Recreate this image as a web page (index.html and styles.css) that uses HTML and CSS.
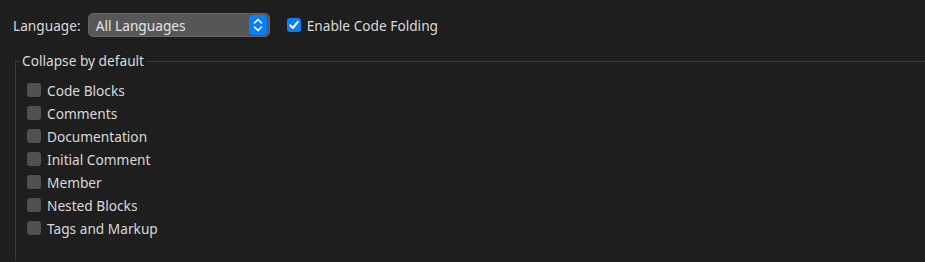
FILE: index.html
```html
<!DOCTYPE html>
<html lang="en">
    <head>
        <meta charset="UTF-8">
        <meta name="viewport" content="width=device-width, initial-scale=1.0">
        <title>Code Folding</title>
        <link rel="stylesheet" href="styles.css">
    </head>
    <body>
        <!-- Top row -->
        <div class="toolbar">
            <span class="label">Language:</span>

            <div class="select">
                <span class="select-text">All Languages</span>
                <span class="stepper">
                    <svg width="18" height="20" viewBox="0 0 18 20">
                        <path d="M5.5 8 L9 4.5 L12.5 8" fill="none" stroke="#fff" stroke-width="1.6" stroke-linecap="round" stroke-linejoin="round"/>
                        <path d="M5.5 12 L9 15.5 L12.5 12" fill="none" stroke="#fff" stroke-width="1.6" stroke-linecap="round" stroke-linejoin="round"/>
                    </svg>
                </span>
            </div>

            <label class="check">
                <input type="checkbox" class="box" checked>
                <span>Enable Code Folding</span>
            </label>
        </div>

        <!-- Collapse options -->
        <fieldset class="group">
            <legend class="legend">Collapse by default</legend>

            <label class="check row"><input type="checkbox" class="box"><span>Code Blocks</span></label>
            <label class="check row"><input type="checkbox" class="box"><span>Comments</span></label>
            <label class="check row"><input type="checkbox" class="box"><span>Documentation</span></label>
            <label class="check row"><input type="checkbox" class="box"><span>Initial Comment</span></label>
            <label class="check row"><input type="checkbox" class="box"><span>Member</span></label>
            <label class="check row"><input type="checkbox" class="box"><span>Nested Blocks</span></label>
            <label class="check row"><input type="checkbox" class="box"><span>Tags and Markup</span></label>
        </fieldset>
    </body>
</html>
```

FILE: styles.css
```css
body {
    margin: 0;
    background-color: #1e1e1e;
    color: #d9d9d9;
    font-family: "Noto Sans", sans-serif;
    font-size: 13.7px;
    overflow: hidden;
}

.toolbar {
    display: flex;
    align-items: center;
    height: 24px;
    padding: 13px 0 0 13px;
}

.label {
    margin-right: 7px;
}

.select {
    display: flex;
    align-items: center;
    justify-content: space-between;
    box-sizing: border-box;
    width: 182px;
    height: 24px;
    padding: 0 2px 0 7px;
    background-color: #575757;
    border: 1px solid #656565;
    border-radius: 5px;
    color: #e4e4e4;
}

.stepper {
    display: flex;
    width: 18px;
    height: 20px;
    background-color: #0b7dff;
    border-radius: 4px;
}

.check {
    display: flex;
    align-items: center;
}

.toolbar .check {
    margin-left: 17px;
}

.box {
    appearance: none;
    width: 14px;
    height: 14px;
    margin: 0 6px 0 0;
    background-color: #505050;
    border-radius: 3px;
}

.box:checked {
    background-color: #0b7dff;
    background-image: url("data:image/svg+xml,%3Csvg xmlns='http://www.w3.org/2000/svg' viewBox='0 0 14 14'%3E%3Cpath d='M3.2 7.4 L5.8 10 L10.8 3.8' fill='none' stroke='white' stroke-width='2' stroke-linecap='round' stroke-linejoin='round'/%3E%3C/svg%3E");
}

.group {
    margin: 14px 0 0 15px;
    padding: 7px 0 22px 11px;
    border: 0;
    border-top: 1px solid #3a3a3a;
    border-left: 1px solid #3a3a3a;
}

.legend {
    margin-left: -7px;
    padding: 0 2px;
    line-height: 20px;
}

.row {
    height: 23px;
}

.row span {
    padding-top: 1px;
}
```
